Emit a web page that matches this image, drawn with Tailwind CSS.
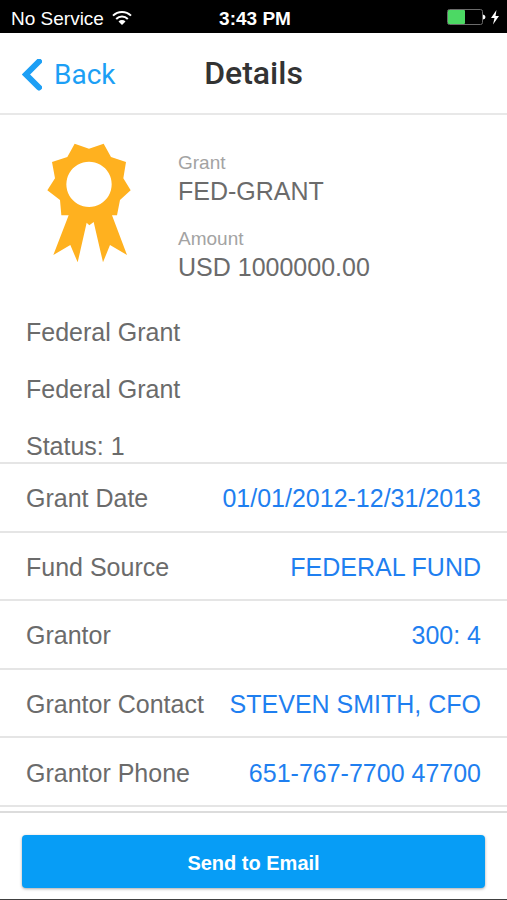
<!doctype html>
<html lang="en">
<head>
  <meta charset="UTF-8">
  <meta name="viewport" content="width=device-width, initial-scale=1.0">
  <title>Details</title>
  <script src="https://cdn.jsdelivr.net/npm/@tailwindcss/browser@4"></script>
</head>
<body class="min-h-screen flex flex-col bg-white border-b border-neutral-700 font-['Liberation_Sans',Arial,sans-serif] text-[25px] leading-8 text-[#6b6b6b]">

  <!-- Status bar -->
  <div class="grid grid-cols-3 items-center h-[33px] pt-1 pl-[11px] pr-2 bg-black text-white text-[19px] leading-7">
    <div class="flex items-center gap-2 whitespace-nowrap">
      No Service
      <svg class="w-5 h-5" viewBox="0 0 20 20" fill="none" stroke="currentColor" stroke-width="2">
        <path d="M1 6.600a12.800 12.800 0 0 1 18 0M4.200 10a8.200 8.200 0 0 1 11.600 0"/>
        <path d="M6.500 12.500a5 5 0 0 1 7 0L10 16z" fill="currentColor" stroke="none"/>
      </svg>
    </div>
    <div class="text-center font-bold">3:43 PM</div>
    <div class="flex items-center justify-end gap-1 pb-1">
      <svg class="w-10 h-4" viewBox="0 0 40 16">
        <rect x=".5" y=".5" width="35" height="15" rx="2" fill="none" stroke="#6b6b6b"/>
        <rect x="1" y="1" width="17" height="14" rx="1" fill="#4cd964"/>
        <path d="M36 5.500q2.500 .5 2.500 2.500t-2.500 2.500z" fill="#fff"/>
      </svg>
      <svg class="w-2 h-4" viewBox="0 0 8 16" fill="currentColor">
        <path d="M5.500 1 0 9h3.500L2 15.500 8 7H4.500z"/>
      </svg>
    </div>
  </div>

  <!-- Navigation -->
  <header class="grid grid-cols-[1fr_auto_1fr] items-center h-[82px] px-[22px] border-b-2 border-[#e8e8e8] font-[Roboto,sans-serif]">
    <a href="#" class="flex items-center gap-3 pt-1 text-[28px] text-[#1c9ff5]">
      <svg class="w-5 h-8" viewBox="0 0 20 32" fill="none" stroke="currentColor" stroke-width="6">
        <path d="M17 2.500 4 15.500l13 13" stroke-linecap="round"/>
      </svg>
      Back
    </a>
    <h1 class="text-[32px] text-[#333] font-medium">Details</h1>
  </header>

  <!-- Grant summary -->
  <section class="flex gap-[47px] px-[47px] pt-[28px]">
    <svg class="shrink-0 w-[84px] h-[120px]" viewBox="51 41 252 360" fill="#ffb11f">
      <path fill-rule="evenodd" d="M134 43 177 58 221 43 243 83 288 98 280 147 302 183 270 212 261 258H246L291 377 240 347 219 399 191 278 178 288 170 280 143 399 121 347 70 377 116 258H94L90 212 52 183 75 147 66 98 112 83zM177 97a68 68 0 1 0 .1 0z"/>
    </svg>
    <dl>
      <dt class="text-[19px] leading-6 pt-2 text-[#a3a3a3]">Grant</dt>
      <dd>FED-GRANT</dd>
      <dt class="text-[19px] leading-6 pt-5 text-[#a3a3a3]">Amount</dt>
      <dd>USD 1000000.00</dd>
    </dl>
  </section>

  <section class="flex flex-col gap-[25px] px-[26px] pt-[33px]">
    <p>Federal Grant</p>
    <p>Federal Grant</p>
    <p>Status: 1</p>
  </section>

  <!-- Grant details, rows share the space left above the footer -->
  <dl class="flex-1 grid auto-rows-fr border-t-2 border-[#e5e5e5]">
    <div class="flex items-center justify-between px-[26px] pt-[2px] border-b-2 border-[#e5e5e5]">
      <dt>Grant Date</dt>
      <dd class="text-[#1f7ff0]">01/01/2012-12/31/2013</dd>
    </div>
    <div class="flex items-center justify-between px-[26px] pt-[2px] border-b-2 border-[#e5e5e5]">
      <dt>Fund Source</dt>
      <dd class="text-[#1f7ff0]">FEDERAL FUND</dd>
    </div>
    <div class="flex items-center justify-between px-[26px] pt-[2px] border-b-2 border-[#e5e5e5]">
      <dt>Grantor</dt>
      <dd class="text-[#1f7ff0]">300: 4</dd>
    </div>
    <div class="flex items-center justify-between px-[26px] pt-[2px] border-b-2 border-[#e5e5e5]">
      <dt>Grantor Contact</dt>
      <dd class="text-[#1f7ff0]">STEVEN SMITH, CFO</dd>
    </div>
    <div class="flex items-center justify-between px-[26px] pt-[2px] border-b-2 border-[#e5e5e5]">
      <dt>Grantor Phone</dt>
      <dd class="text-[#1f7ff0]">651-767-7700 47700</dd>
    </div>
  </dl>

  <footer class="mt-1 px-[22px] pt-[22px] pb-[11px] border-t-2 border-[#dcdcdc]">
    <button type="button" class="block w-full h-[53px] pt-[2px] rounded-sm bg-[#079df6] text-white text-[20px] font-bold shadow-[0_1px_3px_rgba(0,0,0,0.35)]">Send to Email</button>
  </footer>

</body>
</html>
